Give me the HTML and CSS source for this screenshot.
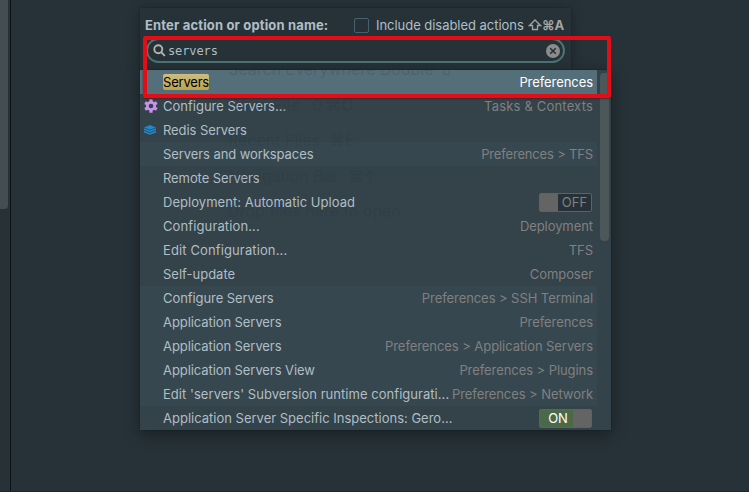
FILE: index.html
```html
<!DOCTYPE html>
<html lang="en">
<head>
<meta charset="utf-8">
<title>Find Action</title>
<link rel="stylesheet" href="styles.css">
</head>
<body>
<div class="sidebar"><div class="side-thumb"></div></div>
<main class="editor">
  <section class="popup">
    <div class="head">
      <div class="title-row">
        <strong class="title">Enter action or option name:</strong>
        <span class="checkbox"></span>
        <span class="check-label">Include disabled actions</span>
        <svg class="shift" viewBox="0 0 13 12"><path d="M6.5 1 L12 6.5 H9 V10.5 H4 V6.5 H1 Z"/></svg>
        <strong class="shortcut">⌘A</strong>
      </div>
      <div class="search">
        <svg class="lens" viewBox="0 0 14 14"><circle cx="5.7" cy="5.7" r="4.3"/><path d="M9 9 L12.8 12.8"/></svg>
        <span class="query">servers</span>
        <svg class="clear" viewBox="0 0 14 14"><circle cx="7" cy="7" r="7"/><path d="M4.2 4.2 L9.8 9.8 M9.8 4.2 L4.2 9.8"/></svg>
      </div>
    </div>
    <div class="list">
      <div class="rows">
        <div class="row selected"><span class="icon"></span><span class="name"><mark>Servers</mark></span><span class="where">Preferences</span></div>
        <div class="row"><span class="icon"><svg class="gear" viewBox="0 0 14 14"><path class="teeth" d="M7 0.2 V13.8 M1.1 3.6 L12.9 10.4 M1.1 10.4 L12.9 3.6"/><circle class="body" cx="7" cy="7" r="5"/><circle class="hole" cx="7" cy="7" r="2.3"/></svg></span><span class="name">Configure Servers...</span><span class="where wide">Tasks &amp; Contexts</span></div>
        <div class="row"><span class="icon"><svg class="redis" viewBox="0 0 12 10"><path d="M0 2.4 L6 0 L12 2.4 L6 4.8 Z"/><path d="M0 3.2 L6 5.6 L12 3.2 V4.9 L6 7.3 L0 4.9 Z"/><path d="M0 5.7 L6 8.1 L12 5.7 V7.4 L6 9.8 L0 7.4 Z"/></svg></span><span class="name tight">Redis Servers</span></div>
        <div class="row alt"><span class="icon"></span><span class="name tight">Servers and workspaces</span><span class="where tfs">Preferences &gt; TFS</span></div>
        <div class="row"><span class="icon"></span><span class="name tight">Remote Servers</span></div>
        <div class="row"><span class="icon"></span><span class="name deploy">Deployment: Automatic Upload</span><span class="toggle off"><i></i><b>OFF</b></span></div>
        <div class="row"><span class="icon"></span><span class="name loose">Configuration...</span><span class="where">Deployment</span></div>
        <div class="row"><span class="icon"></span><span class="name loose">Edit Configuration...</span><span class="where">TFS</span></div>
        <div class="row"><span class="icon"></span><span class="name">Self-update</span><span class="where">Composer</span></div>
        <div class="row alt"><span class="icon"></span><span class="name tight">Configure Servers</span><span class="where">Preferences &gt; SSH Terminal</span></div>
        <div class="row alt"><span class="icon"></span><span class="name tight">Application Servers</span><span class="where">Preferences</span></div>
        <div class="row alt"><span class="icon"></span><span class="name tight">Application Servers</span><span class="where">Preferences &gt; Application Servers</span></div>
        <div class="row alt"><span class="icon"></span><span class="name tight">Application Servers View</span><span class="where">Preferences &gt; Plugins</span></div>
        <div class="row alt"><span class="icon"></span><span class="name deploy">Edit 'servers' Subversion runtime configurati...</span><span class="where">Preferences &gt; Network</span></div>
        <div class="row"><span class="icon"></span><span class="name">Application Server Specific Inspections: Gero...</span><span class="toggle on"><b>ON</b><i></i></span></div>
      </div>
      <div class="track"><div class="thumb"></div></div>
      <div class="hints">
        <p>Search Everywhere Double ⇧</p><p>Go to File&nbsp; ⇧⌘O</p><p>Recent Files&nbsp; ⌘E</p><p>Navigation Bar&nbsp; ⌘↑</p><p>Drop files here to open</p>
      </div>
    </div>
    <div class="frame"></div>
  </section>
</main>
</body>
</html>
```

FILE: styles.css
```css
* { box-sizing: border-box; }
body {
  margin: 0;
  width: 749px;
  height: 492px;
  display: flex;
  overflow: hidden;
  background: #263238;
  color: #b0bec5;
  font: 13px/24px Inter, "Liberation Sans", sans-serif;
  border-bottom: 1px solid #1d2730;
}
.sidebar { width: 11px; border-right: 1px solid #0c1114; }
.side-thumb { width: 8px; height: 209px; background: #434d52; border-radius: 0 0 4px 0; }
.editor { flex: 1; padding: 8px 0 0 129px; }
.popup { position: relative; width: 471px; }
.head {
  width: 431px;
  height: 62px;
  background: #263238;
  box-shadow: 0 0 1px #11191d, 0 2px 12px rgba(0,0,0,.3);
}
.title-row { height: 29px; padding: 5px 6px 0 5px; display: flex; align-items: center; white-space: nowrap; }
.title { font-weight: 700; width: 209px; letter-spacing: .16px; }
.checkbox { width: 15px; height: 15px; border: 1px solid #46616b; border-radius: 2px; margin-right: 7px; }
.check-label { width: 152px; letter-spacing: -.04px; }
.shift { width: 14px; height: 12px; fill: none; stroke: #a3a5a5; stroke-width: 1.3; }
.shortcut { color: #a3a5a5; }
.search {
  height: 25px;
  margin: 1px 6px 0;
  padding: 0 3px 0 5px;
  border: 2px solid #4b7475;
  border-radius: 13px;
  display: flex;
  align-items: center;
}
.lens { width: 13px; height: 13px; fill: none; stroke: #b3b3b3; stroke-width: 2; }
.query { flex: 1; padding-left: 2px; font: 12px/20px "DejaVu Sans Mono", monospace; letter-spacing: -.1px; }
.clear { width: 14px; height: 14px; fill: #8b8d8c; stroke: #263238; stroke-width: 1.6; }
.clear circle { stroke: none; }
.list {
  position: relative;
  display: flex;
  height: 360px;
  background: #34424a;
  box-shadow: 0 0 1px #11191d, 0 4px 14px rgba(0,0,0,.4);
}
.rows { width: 457px; }
.row { height: 24px; padding: 0 4px 0 3px; display: flex; align-items: center; white-space: nowrap; }
.alt { background: #37474f; }
.selected { background: #546e7a; }
.icon { width: 20px; height: 24px; display: flex; align-items: center; padding-left: 1px; }
.name { flex: 1; }
.tight { letter-spacing: -.08px; }
.loose { letter-spacing: .12px; }
.deploy { letter-spacing: .04px; }
.where { color: #808080; letter-spacing: -.07px; }
.wide { letter-spacing: .18px; }
.tfs { letter-spacing: -.17px; }
.selected .where { color: #fff; }
mark { color: #000; background: linear-gradient(#cabd83, #bda449); border-radius: 2px; display: inline-block; height: 16px; line-height: 17px; letter-spacing: -.2px; }
.gear { width: 14px; height: 14px; fill: #c792ea; }
.gear .teeth { stroke: #c792ea; stroke-width: 3.2; }
.gear .hole { fill: #34424a; }
.redis { width: 12px; height: 10px; fill: #1e88cf; }
.toggle { display: flex; width: 53px; height: 19px; border: 1px solid #5d6263; border-radius: 2px; margin-right: 1px; line-height: 17px; }
.toggle b { flex: 1; font-weight: 400; text-align: center; }
.toggle i { width: 18px; background: #646464; }
.off { background: #263238; color: #808080; }
.on { background: #4b6948; color: #fff; }
.on b { padding-left: 3px; }
.track { width: 14px; padding: 3px 2px 0 3px; }
.thumb { width: 9px; height: 168px; border-radius: 4px; background: #4b5759; }
.hints { position: absolute; inset: 0; overflow: hidden; pointer-events: none; color: rgba(28,45,54,.17); font-size: 16px; padding-left: 88px; }
.hints p { margin: -13px 0 11.5px; height: 24px; white-space: nowrap; }
.hints p + p { margin-top: 0; }
.frame { position: absolute; left: 3px; top: 28px; width: 468px; height: 62px; border: 4px solid #e30d18; border-radius: 2px; box-shadow: 0 1px 2px rgba(100,0,8,.6); }
```
